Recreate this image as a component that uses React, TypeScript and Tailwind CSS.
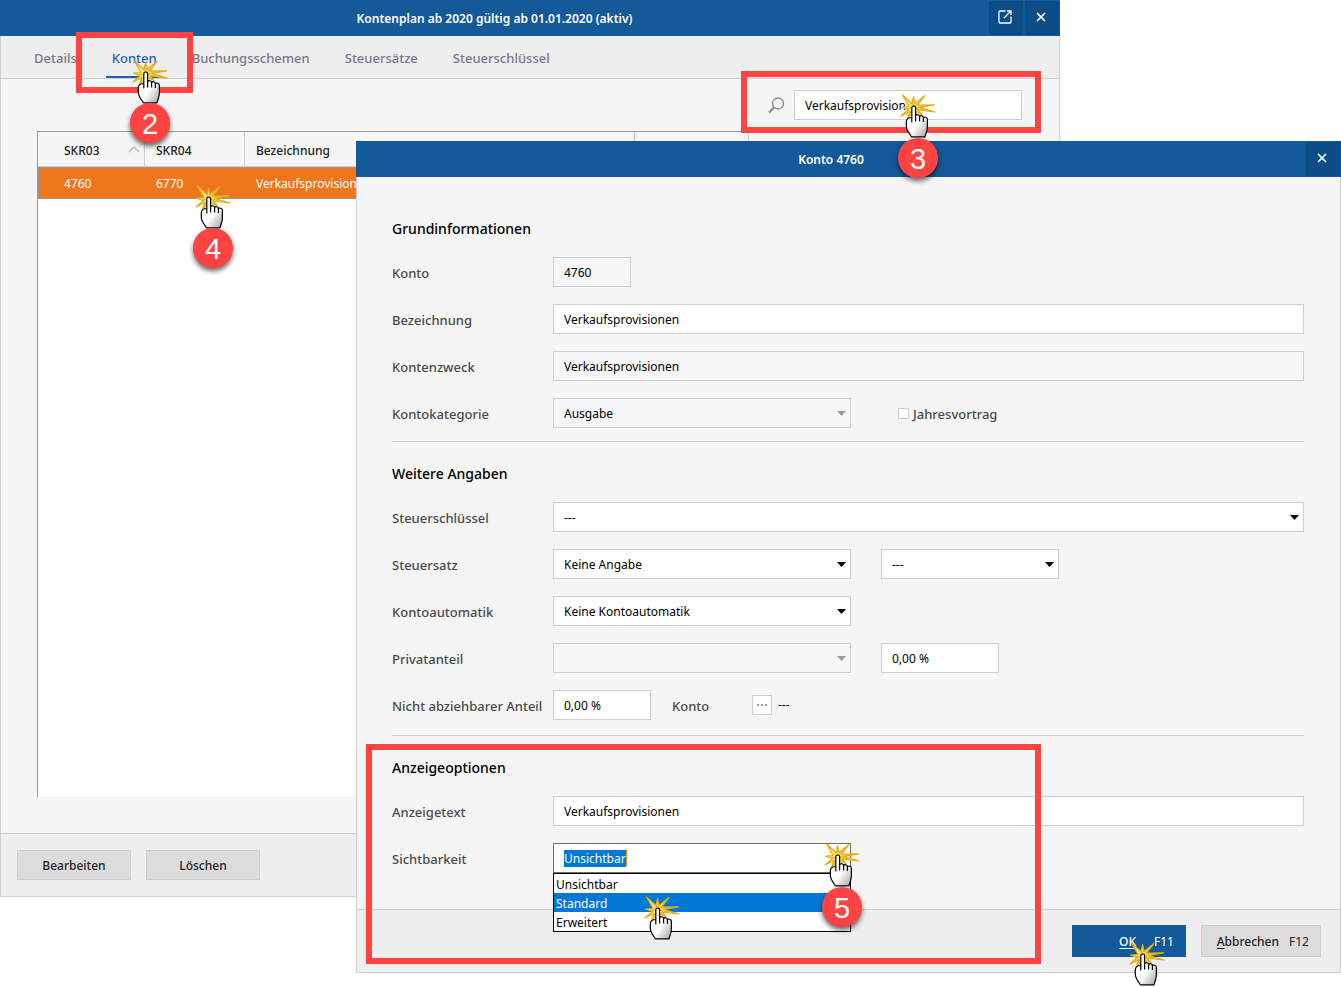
import { useEffect, useRef, type ReactNode } from "react";
import { X } from "lucide-react";
import clsx from "clsx";

const LABEL = "pt-px text-[13px] font-medium text-[#4a4a4a]";
const FIELD = "h-[30px] border border-[#cfcfcf] px-2.5 text-black outline-none rounded-none";
const ENABLED = "bg-white";
const DISABLED = "bg-[#f4f6f8]";

function ClickCursor({ className }: { className: string }) {
    return (
        <svg className={clsx("pointer-events-none absolute z-20 h-11 w-9", className)} viewBox="0 0 36 44" aria-hidden="true">
            <path
                d="M12 9.500 13.700 2.500 15 9.500 25 1.500 17.500 11.200 34.500 10.800 20 13.500 35 18 17.500 16 22 20.500 13 17 6.500 27 10 17.500 1 22 8.500 15.500 1.500 13.200 9 12.500 2.500 1Z"
                fill="#fbe27a"
                stroke="#e5ab0e"
                strokeWidth="1.200"
                strokeLinejoin="round"
            />
            <path
                d="M13.500 13 11 8M13.500 13 14.500 7M14 13 20 7.500M14 13.500 24 12.500M14 14 25 16M13 14 6 15M13 14 9 21"
                stroke="#e5ab0e"
                strokeWidth=".8"
            />
            <path
                d="M11.800 28V13.800c0-2.400 3.800-2.400 3.800 0v8.200c.6-2 4-1.600 4 .6.9-1.600 3.600-1 3.800 1 1-1.200 4-.4 4 1.600v7.300c0 4.200-1.400 6.400-2.400 10.300H11.400C9.400 39.500 6.300 36.500 6.300 32v-4c0-2.500 2.200-4.500 5.500-4.500z"
                fill="url(#hand)"
                stroke="#000"
                strokeWidth="1.200"
                strokeLinejoin="round"
            />
            <path d="M15.600 22v5.500M19.600 22.600v5M23.400 23.600v4.500" stroke="#000" strokeWidth="1.200" />
            <defs>
                <linearGradient id="hand" x1="0" y1="0" x2="1" y2="1">
                    <stop offset=".55" stopColor="#fff" />
                    <stop offset="1" stopColor="#a0a0a0" />
                </linearGradient>
            </defs>
        </svg>
    );
}

function StepBadge({ step, className }: { step: number; className: string }) {
    return (
        <span
            className={clsx(
                "pointer-events-none absolute z-20 flex size-10 items-center justify-center rounded-full bg-[#ff4343] pt-0.5 font-['Liberation_Sans',sans-serif] text-[29px] leading-none text-white shadow-[0_3px_5px_rgba(0,0,0,0.6)]",
                className
            )}
        >
            {step}
        </span>
    );
}

function Frame({ className }: { className: string }) {
    return <div className={clsx("pointer-events-none absolute z-10 border-6 border-[#ff4343]", className)} />;
}

function TitleBar({ title, children }: { title: string; children: ReactNode }) {
    return (
        <header className="flex h-9 items-stretch bg-[#14599a] text-white">
            <h1 className="flex flex-1 items-center justify-center pt-px text-[12px] font-semibold">{title}</h1>
            <div className="flex gap-0.5 py-px pr-px">{children}</div>
        </header>
    );
}

function TitleButton({ label, children }: { label: string; children: ReactNode }) {
    return (
        <button aria-label={label} className="flex w-[34px] items-center justify-center bg-[#0c4d87] pr-0.5 pb-0.5 text-white">
            {children}
        </button>
    );
}

function Row({ label, htmlFor, children }: { label: string; htmlFor: string; children: ReactNode }) {
    return (
        <div className="flex items-center">
            <label htmlFor={htmlFor} className={clsx("w-[161px] shrink-0 whitespace-nowrap", LABEL)}>
                {label}
            </label>
            {children}
        </div>
    );
}

interface DropDownProps {
    id: string;
    value: string;
    label?: string;
    disabled?: boolean;
    className: string;
}

function DropDown({ id, value, label, disabled, className }: DropDownProps) {
    return (
        <div className={clsx("relative", className)}>
            <select
                id={id}
                aria-label={label}
                disabled={disabled}
                className={clsx("w-full appearance-none pt-0.5 opacity-100", FIELD, disabled ? DISABLED : ENABLED)}
            >
                <option>{value}</option>
            </select>
            <svg className="pointer-events-none absolute top-[13px] right-[5px] h-[5px] w-[9px]" viewBox="0 0 9 5" aria-hidden="true">
                <path d="M0 0h9L4.500 5z" fill={disabled ? "#9b9b9b" : "#000"} />
            </svg>
        </div>
    );
}

function Visibility() {
    const input = useRef<HTMLInputElement>(null);

    useEffect(() => {
        input.current?.focus();
        input.current?.select();
    }, []);

    return (
        <div className="relative w-[298px]">
            <input
                id="sichtbarkeit"
                ref={input}
                defaultValue="Unsichtbar"
                className="h-[30px] w-full border border-[#6d6d6d] bg-white px-2.5 outline-none selection:bg-[#0078d7] selection:text-white"
            />
            {/* text caret at the end of the selection */}
            <span className="pointer-events-none absolute top-1.5 left-[73px] h-[17px] w-px bg-[#ff8728]" />
            <select
                size={3}
                defaultValue="Standard"
                aria-label="Sichtbarkeit Auswahl"
                className="absolute top-full left-0 h-[59px] w-full appearance-none overflow-hidden border border-black bg-white outline-none"
            >
                {["Unsichtbar", "Standard", "Erweitert"].map((o) => (
                    <option
                        key={o}
                        className="h-[19px] min-h-0 px-0.5 pt-0.5 pb-0 leading-[18px] text-black checked:bg-[linear-gradient(#0078d7,#0078d7)] checked:text-white"
                    >
                        {o}
                    </option>
                ))}
            </select>
            <ClickCursor className="top-0 left-[271px]" />
            <ClickCursor className="top-[53px] left-[91px]" />
            <StepBadge step={5} className="top-11 left-[269px]" />
        </div>
    );
}

const tabs = ["Details", "Konten", "Buchungsschemen", "Steuersätze", "Steuerschlüssel"];

function ChartOfAccounts() {
    return (
        <section className="absolute top-0 right-[281px] left-0">
            <TitleBar title="Kontenplan ab 2020 gültig ab 01.01.2020 (aktiv)">
                <TitleButton label="In neuem Fenster öffnen">
                    <svg className="size-4" viewBox="0 0 16 16" fill="none" stroke="currentColor" strokeWidth="1.300" aria-hidden="true">
                        <path d="M8.500 2H3a1 1 0 0 0-1 1v10a1 1 0 0 0 1 1h10a1 1 0 0 0 1-1V7.500M7 9l6.500-6.500M10 2h4v4" />
                    </svg>
                </TitleButton>
                <TitleButton label="Schließen">
                    <X className="size-3.5" strokeWidth={3} />
                </TitleButton>
            </TitleBar>
            <div className="border-x border-b border-[#cfcfcf] bg-[#f5f5f5]">
                <nav className="flex h-[43px] items-stretch gap-[23px] border-b border-[#cfcfcf] bg-[#eeeeee] px-[27px]">
                    {tabs.map((tab) => (
                        <a
                            key={tab}
                            href="#"
                            className={clsx(
                                "flex items-center border-b-2 px-1.5 pt-1 text-[13px] font-medium",
                                tab === "Konten" ? "border-[#1f5fb8] text-[#1f5fb8]" : "border-transparent text-[#77778c]"
                            )}
                        >
                            {tab}
                        </a>
                    ))}
                </nav>
                <div className="pt-[11px] pr-[37px] pb-9 pl-9">
                    <div className="flex items-center justify-end gap-[9px]">
                        <svg className="size-[17px]" viewBox="0 0 17 17" fill="none" stroke="#858585" aria-hidden="true">
                            <circle cx="10" cy="6.500" r="5.500" strokeWidth="1.300" />
                            <path d="M6 10.500 1 15.500" strokeWidth="2.200" />
                        </svg>
                        <input aria-label="Suche" defaultValue="Verkaufsprovision" className={clsx("w-[228px]", FIELD, ENABLED)} />
                    </div>
                    <div className="mt-[11px] h-[666px] border-t border-l border-[#999999] bg-white">
                        <table className="w-full table-fixed border-separate border-spacing-0 text-left">
                            <colgroup>
                                <col className="w-[107px]" />
                                <col className="w-[100px]" />
                                <col className="w-[390px]" />
                                <col className="w-[114px]" />
                                <col />
                            </colgroup>
                            <thead>
                                <tr className="h-[35px] bg-[#f5f5f5] text-[#222222] *:border-b *:border-[#cfcfcf] *:p-0 *:pt-1">
                                    <th className="border-r font-medium">
                                        <div className="flex items-center justify-between pr-1 pl-[26px]">
                                            SKR03
                                            <svg className="mb-1 h-[7px] w-3" viewBox="0 0 12 7" fill="none" stroke="#c8c8c8" strokeWidth="2" aria-hidden="true">
                                                <path d="m1 6 5-5 5 5" />
                                            </svg>
                                        </div>
                                    </th>
                                    <th className="border-r font-medium">
                                        <div className="pl-[11px]">SKR04</div>
                                    </th>
                                    <th className="border-r font-medium">
                                        <div className="pl-[11px]">Bezeichnung</div>
                                    </th>
                                    <th className="border-r" />
                                    <th />
                                </tr>
                            </thead>
                            <tbody>
                                <tr className="h-8 bg-[#ee761c] text-white *:border-y *:border-[#999999] *:py-0 *:pt-0.5">
                                    <td className="border-l pl-[25px]">4760</td>
                                    <td className="pl-[11px]">6770</td>
                                    <td className="pl-[11px]">Verkaufsprovisionen</td>
                                    <td />
                                    <td />
                                </tr>
                            </tbody>
                        </table>
                    </div>
                </div>
                <footer className="flex gap-[15px] border-t border-[#cfcfcf] bg-[#eeeeee] p-4">
                    {["Bearbeiten", "Löschen"].map((action) => (
                        <button key={action} className="h-[30px] w-[114px] border border-[#cfcfcf] bg-[#dcdcdc] pt-0.5 font-medium text-[#222222]">
                            {action}
                        </button>
                    ))}
                </footer>
            </div>

            <Frame className="top-8 left-[76px] h-[61px] w-[117px]" />
            <Frame className="top-[71px] right-[19px] h-[62px] w-[300px]" />
            <ClickCursor className="top-[60px] left-[132px]" />
            <StepBadge step={2} className="top-[103px] left-[130px]" />
            <ClickCursor className="top-[94px] right-[124px]" />
            <StepBadge step={3} className="top-[138px] right-[122px]" />
            <ClickCursor className="top-[185px] left-[195px]" />
            <StepBadge step={4} className="top-[228px] left-[193px]" />
        </section>
    );
}

function SectionTitle({ children }: { children: ReactNode }) {
    return <h2 className="mb-4 text-[14px] leading-6 font-medium text-black">{children}</h2>;
}

function AccountDialog() {
    return (
        <section className="absolute top-[141px] right-0 left-[356px] z-10">
            <TitleBar title="Konto 4760">
                <TitleButton label="Schließen">
                    <X className="size-3.5" strokeWidth={3} />
                </TitleButton>
            </TitleBar>
            <form className="border-x border-b border-[#cfcfcf] bg-[#f5f5f5]">
                <div className="pt-10 pr-9 pb-9 pl-[35px]">
                    <SectionTitle>Grundinformationen</SectionTitle>
                    <div className="flex flex-col gap-[17px]">
                        <Row label="Konto" htmlFor="konto">
                            <input id="konto" readOnly defaultValue="4760" className={clsx("w-[78px]", FIELD, DISABLED)} />
                        </Row>
                        <Row label="Bezeichnung" htmlFor="bezeichnung">
                            <input id="bezeichnung" defaultValue="Verkaufsprovisionen" className={clsx("flex-1", FIELD, ENABLED)} />
                        </Row>
                        <Row label="Kontenzweck" htmlFor="kontenzweck">
                            <input id="kontenzweck" readOnly defaultValue="Verkaufsprovisionen" className={clsx("flex-1", FIELD, DISABLED)} />
                        </Row>
                        <Row label="Kontokategorie" htmlFor="kontokategorie">
                            <DropDown id="kontokategorie" value="Ausgabe" disabled className="w-[298px]" />
                            <div className="ml-[47px] flex items-center gap-1">
                                <input id="jahresvortrag" type="checkbox" className="size-[11px] appearance-none border border-[#cfcfcf] bg-white" />
                                <label htmlFor="jahresvortrag" className={LABEL}>
                                    Jahresvortrag
                                </label>
                            </div>
                        </Row>
                    </div>

                    <hr className="mt-[13px] mb-5 border-[#cfcfcf]" />
                    <SectionTitle>Weitere Angaben</SectionTitle>
                    <div className="flex flex-col gap-[17px]">
                        <Row label="Steuerschlüssel" htmlFor="steuerschluessel">
                            <DropDown id="steuerschluessel" value="---" className="flex-1" />
                        </Row>
                        <Row label="Steuersatz" htmlFor="steuersatz">
                            <DropDown id="steuersatz" value="Keine Angabe" className="w-[298px]" />
                            <DropDown id="steuersatz2" value="---" label="Steuersatz Prozent" className="ml-[30px] w-[178px]" />
                        </Row>
                        <Row label="Kontoautomatik" htmlFor="kontoautomatik">
                            <DropDown id="kontoautomatik" value="Keine Kontoautomatik" className="w-[298px]" />
                        </Row>
                        <Row label="Privatanteil" htmlFor="privatanteil">
                            <DropDown id="privatanteil" value="" disabled className="w-[298px]" />
                            <input aria-label="Privatanteil Prozent" defaultValue="0,00 %" className={clsx("ml-[30px] w-[118px]", FIELD, ENABLED)} />
                        </Row>
                        <Row label="Nicht abziehbarer Anteil" htmlFor="anteil">
                            <input id="anteil" defaultValue="0,00 %" className={clsx("w-[98px]", FIELD, ENABLED)} />
                            <label htmlFor="anteilkonto" className={clsx("ml-[21px] w-20", LABEL)}>
                                Konto
                            </label>
                            <button id="anteilkonto" type="button" className="flex size-5 items-center justify-center gap-0.5 border border-[#cfcfcf] bg-white">
                                <i className="size-0.5 bg-[#999999]" />
                                <i className="size-0.5 bg-[#999999]" />
                                <i className="size-0.5 bg-[#999999]" />
                            </button>
                            <span className="ml-1.5">---</span>
                        </Row>
                    </div>

                    <hr className="mt-[15px] mb-5 border-[#cfcfcf]" />
                    <SectionTitle>Anzeigeoptionen</SectionTitle>
                    <div className="flex flex-col gap-[17px]">
                        <Row label="Anzeigetext" htmlFor="anzeigetext">
                            <input id="anzeigetext" defaultValue="Verkaufsprovisionen" className={clsx("flex-1", FIELD, ENABLED)} />
                        </Row>
                        <Row label="Sichtbarkeit" htmlFor="sichtbarkeit">
                            <Visibility />
                        </Row>
                    </div>
                </div>
                <footer className="flex justify-end gap-[15px] border-t border-[#cfcfcf] bg-[#eeeeee] py-[15px] pr-[19px]">
                    <button type="button" className="relative flex h-8 w-[114px] items-center justify-end gap-[18px] bg-[#14599a] pt-0.5 pr-3 font-medium text-white">
                        <span className="underline underline-offset-2">OK</span>
                        <span className="text-[12px] font-normal">F11</span>
                        <ClickCursor className="top-[17px] left-[57px]" />
                    </button>
                    <button type="button" className="flex h-8 w-[120px] items-center justify-end gap-2.5 border border-[#cfcfcf] bg-[#dcdcdc] pt-0.5 pr-[11px] font-medium text-[#222222]">
                        <span>
                            <u className="underline-offset-2">A</u>bbrechen
                        </span>
                        <span className="text-[12px] font-normal">F12</span>
                    </button>
                </footer>
            </form>

            <Frame className="bottom-[9px] left-[10px] h-[220px] w-[675px]" />
        </section>
    );
}

export default function App() {
    return (
        <main className="relative min-h-screen overflow-hidden bg-white font-['Noto_Sans','Open_Sans',sans-serif] text-[12px] leading-5 text-black">
            <ChartOfAccounts />
            <AccountDialog />
        </main>
    );
}
